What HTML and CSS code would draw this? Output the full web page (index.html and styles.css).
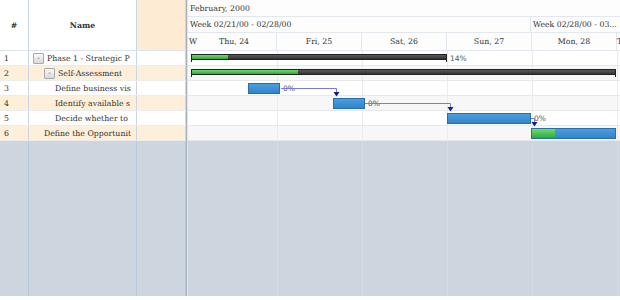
FILE: index.html
```html
<!DOCTYPE html>
<html>
<head>
<meta charset="utf-8">
<link rel="stylesheet" href="styles.css">
</head>
<body>
<div class="gantt">
  <div class="grid">
    <div class="grow ghead">
      <div class="c num">#</div>
      <div class="c name">Name</div>
      <div class="c extra"></div>
    </div>
    <div class="grow">
      <div class="c num">1</div>
      <div class="c name lvl0"><span class="exp">-</span><span class="txt">Phase 1 - Strategic P</span></div>
      <div class="c extra"></div>
    </div>
    <div class="grow alt">
      <div class="c num">2</div>
      <div class="c name lvl1"><span class="exp">-</span><span class="txt">Self-Assessment</span></div>
      <div class="c extra"></div>
    </div>
    <div class="grow">
      <div class="c num">3</div>
      <div class="c name lvl2"><span class="txt">Define business vis</span></div>
      <div class="c extra"></div>
    </div>
    <div class="grow alt">
      <div class="c num">4</div>
      <div class="c name lvl2"><span class="txt">Identify available s</span></div>
      <div class="c extra"></div>
    </div>
    <div class="grow">
      <div class="c num">5</div>
      <div class="c name lvl2"><span class="txt">Decide whether to</span></div>
      <div class="c extra"></div>
    </div>
    <div class="grow alt">
      <div class="c num">6</div>
      <div class="c name lvl1b"><span class="txt">Define the Opportunit</span></div>
      <div class="c extra"></div>
    </div>
    <div class="grow gfill">
      <div class="c num"></div>
      <div class="c name"></div>
      <div class="c extra"></div>
    </div>
  </div>
  <div class="splitter"></div>
  <div class="timeline">
    <div class="thead">
      <div class="month">February, 2000</div>
      <div class="weeks">
        <div class="week w1">Week 02/21/00 - 02/28/00</div>
        <div class="week w2">Week 02/28/00 - 03...</div>
      </div>
      <div class="days">
        <div class="day wed">W</div>
        <div class="day">Thu, 24</div>
        <div class="day">Fri, 25</div>
        <div class="day">Sat, 26</div>
        <div class="day">Sun, 27</div>
        <div class="day">Mon, 28</div>
        <div class="day tue">T</div>
      </div>
    </div>
    <div class="tbody">
      <div class="trow">
        <div class="sbar" style="left:3px;width:256px"><div class="prog" style="width:36px"></div></div>
        <span class="pct" style="left:262px">14%</span>
      </div>
      <div class="trow alt">
        <div class="sbar" style="left:3px;width:425px"><div class="prog" style="width:106px"></div></div>
      </div>
      <div class="trow">
        <div class="tbar" style="left:60px;width:32px"></div>
        <span class="pct" style="left:95px">0%</span>
      </div>
      <div class="trow alt">
        <div class="tbar" style="left:145px;width:32px"></div>
        <span class="pct" style="left:180px">0%</span>
      </div>
      <div class="trow">
        <div class="tbar" style="left:259px;width:84px"></div>
        <span class="pct" style="left:346px">0%</span>
      </div>
      <div class="trow alt">
        <div class="tbar" style="left:343px;width:85px"><div class="tprog" style="width:23px"></div></div>
      </div>
      <div class="tfill"></div>
      <svg class="links" width="432" height="90" viewBox="0 0 432 90">
        <path d="M93 37.5 H148.5 V42" />
        <polygon points="145.5,41 151.5,41 148.5,45.5" />
        <path d="M177 52.5 H262.5 V57" />
        <polygon points="259.5,56 265.5,56 262.5,60.5" />
        <path d="M343 67.5 H346.5 V72" />
        <polygon points="343.5,71 349.5,71 346.5,75.5" />
      </svg>
    </div>
  </div>
</div>
</body>
</html>
```

FILE: styles.css
```css
* { box-sizing: border-box; }
html, body { margin: 0; padding: 0; background: #fff; }
body { width: 620px; height: 300px; overflow: hidden; font-family: "DejaVu Serif", serif; font-size: 7.8px; color: #333; }

.gantt { display: flex; height: 296px; background: #cdd6df; }

.grid { width: 186px; display: flex; flex-direction: column; }
.grow { display: flex; height: 15px; background: #fff; border-bottom: 1px solid #ececec; }
.grow.alt { background: #fdefd9; }
.grow.ghead { height: 51px; border-bottom: 1px solid #dde4ec; }
.grow.gfill { flex: 1; background: #cdd6df; border-bottom: 0; }

.c { border-right: 1px solid #c8d6e4; display: flex; align-items: center; overflow: hidden; white-space: nowrap; }
.num { width: 29px; padding-left: 4px; }
.name { width: 108px; padding-right: 2px; }
.extra { width: 49px; }
.ghead .c { justify-content: center; font-weight: bold; padding: 0; }
.ghead .extra { background: #fdebd3; }
.gfill .c { border-right-color: #b7c8d8; }

.lvl0 { padding-left: 4px; }
.lvl1 { padding-left: 15px; }
.lvl2 { padding-left: 26px; }
.lvl1b { padding-left: 15px; }
.txt { overflow: hidden; }
.exp { width: 11px; height: 11px; flex: none; margin-right: 3px; border: 1px solid #a9a9a9; border-radius: 1px; background: linear-gradient(#fafafa, #d9d9d9); font-family: "DejaVu Sans", sans-serif; font-size: 7px; line-height: 9px; text-align: center; color: #444; }

.splitter { width: 2px; background: #a7b3bf; border-right: 1px solid #dfe5eb; }

.timeline { flex: 1; display: flex; flex-direction: column; overflow: hidden; }
.thead { background: #fdfdfd; }
.month { height: 17px; border-bottom: 1px solid #e3e8ee; padding-left: 2px; display: flex; align-items: center; }
.weeks { display: flex; height: 16px; border-bottom: 1px solid #e3e8ee; }
.week { display: flex; align-items: center; white-space: nowrap; overflow: hidden; padding-left: 2px; }
.week.w1 { width: 343px; border-right: 1px solid #e3e8ee; }
.week.w2 { flex: 1; padding-left: 2px; }
.days { display: flex; height: 18px; border-bottom: 1px solid #e3e8ee; }
.day { width: 85px; flex: none; border-right: 1px solid #e3e8ee; display: flex; align-items: center; justify-content: center; white-space: nowrap; }
.day.wed { width: 4px; border-right: 0; justify-content: flex-start; padding-left: 1px; overflow: visible; }
.day.tue { flex: 1; border-right: 0; justify-content: flex-start; padding-left: 0; overflow: visible; }

.tbody { position: relative; flex: 1; display: flex; flex-direction: column; }
.trow { position: relative; height: 15px; border-bottom: 1px solid #e8e8e8;
  background-color: #fff;
  background-image: repeating-linear-gradient(to right, transparent 0 84px, #ececec 84px 85px);
  background-position: 5px 0; }
.trow.alt { background-color: #f7f7f7; }
.tfill { flex: 1; background-color: #cdd6df;
  background-image: repeating-linear-gradient(to right, transparent 0 84px, #d3dbe3 84px 85px);
  background-position: 5px 0; }

.sbar { position: absolute; top: 3px; height: 6px; background: linear-gradient(#5a5a5a, #333); border: 1px solid #222; }
.sbar::before, .sbar::after { content: ""; position: absolute; top: 4px; width: 1px; height: 3px; background: #222; }
.sbar::before { left: -1px; }
.sbar::after { right: -1px; }
.prog { height: 100%; background: linear-gradient(#6fdc6f, #2fa83a); }
.tbar { position: absolute; top: 2px; height: 11px; background: linear-gradient(#4a9ee0, #3185c8); border: 1px solid #2a6ea6; }
.tprog { height: 100%; background: linear-gradient(#6fdc6f, #2fa83a); }
.pct { position: absolute; top: 0; height: 14px; display: flex; align-items: center; font-family: "DejaVu Sans", sans-serif; font-size: 7.5px; color: #555; }

.links { position: absolute; left: 0; top: 0; pointer-events: none; }
.links path { fill: none; stroke: #7b7bd6; stroke-width: 1; }
.links polygon { fill: #1a1a8c; }
```
